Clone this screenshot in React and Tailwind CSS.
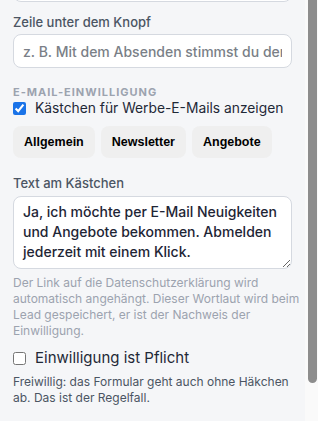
import { useState } from 'react'

// ─── Einwilligung-Panel ──────────────────────────────────────────────────────

const VORLAGEN = ['Allgemein', 'Newsletter', 'Angebote']

const DEFAULT_TEXT =
  'Ja, ich möchte per E-Mail Neuigkeiten und Angebote bekommen. Abmelden jederzeit mit einem Klick.'

export default function App() {
  const [zeile,    setZeile]    = useState('')
  const [anzeigen, setAnzeigen] = useState(true)
  const [text,     setText]     = useState(DEFAULT_TEXT)
  const [pflicht,  setPflicht]  = useState(false)

  const inputCls = `w-full bg-white border border-[#d5d9e0] rounded-lg px-[9px] text-[14px] font-medium
    text-[#1e2535] placeholder:text-[#7a7f87] focus:outline-none`

  return (
    <div className="flex w-[318px] h-[421px] overflow-hidden bg-[#fafafa] font-['Inter',sans-serif]">
      <div className="w-[305px] h-full bg-[#f5f6f8] px-[13px] flex flex-col">
        <div className="-mt-[32px] h-[34px] w-full bg-white border border-[#d5d9e0] rounded-lg shrink-0" />

        <label className="mt-[11px] text-[13px] leading-[18px] font-medium text-[#4b5563]">
          Zeile unter dem Knopf
        </label>
        <input
          value={zeile}
          onChange={e => setZeile(e.target.value)}
          placeholder="z. B. Mit dem Absenden stimmst du der Verarbeitung zu"
          className={`${inputCls} mt-[3px] h-[34px] shrink-0`}
        />

        <h3 className="mt-[17px] text-[11px] leading-[14px] font-bold uppercase tracking-[0.09em] text-[#9ca3af]">
          E-Mail-Einwilligung
        </h3>
        <label className="-mt-[1px] flex items-center gap-[9px] h-[20px]">
          <input
            type="checkbox"
            checked={anzeigen}
            onChange={e => setAnzeigen(e.target.checked)}
            className="w-[13px] h-[13px] accent-[#1a73e8]"
          />
          <span className="text-[13.8px] text-[#1f2937] whitespace-nowrap">Kästchen für Werbe-E-Mails anzeigen</span>
        </label>

        <div className="mt-[8px] flex gap-[6px]">
          {VORLAGEN.map(v => (
            <button
              key={v}
              onClick={() => setText(DEFAULT_TEXT)}
              className="h-[32px] px-[11px] rounded-lg bg-[#efefef] text-[12.5px] font-bold text-black
                font-['Liberation_Sans',Arial,sans-serif]"
            >
              {v}
            </button>
          ))}
        </div>

        <label className="mt-[16px] text-[13px] leading-[18px] font-medium text-[#4b5563]">
          Text am Kästchen
        </label>
        <textarea
          value={text}
          onChange={e => setText(e.target.value)}
          className={`${inputCls} mt-[4px] h-[73px] pt-[5px] pb-[6px] leading-[20px] shrink-0`}
        />
        <p className="mt-[6px] -mr-[8px] text-[12px] leading-[16px] text-[#9ca3af]">
          Der Link auf die Datenschutzerklärung wird automatisch angehängt. Dieser Wortlaut wird beim
          Lead gespeichert, er ist der Nachweis der Einwilligung.
        </p>

        <label className="mt-[9px] flex items-center gap-[9px] h-[20px]">
          <input
            type="checkbox"
            checked={pflicht}
            onChange={e => setPflicht(e.target.checked)}
            className="w-[13px] h-[13px] accent-[#1a73e8]"
          />
          <span className="text-[15px] text-[#1f2937]">Einwilligung ist Pflicht</span>
        </label>
        <p className="mt-[6px] text-[12px] leading-[16px] text-[#4b5563]">
          Freiwillig: das Formular geht auch ohne Häkchen ab. Das ist der Regelfall.
        </p>
      </div>

      {/* Scrollleiste */}
      <div className="w-[13px] h-full pl-[3px]">
        <div className="w-[9px] h-[383px] bg-[#8d8d8d] rounded-b-full" />
      </div>
    </div>
  )
}
